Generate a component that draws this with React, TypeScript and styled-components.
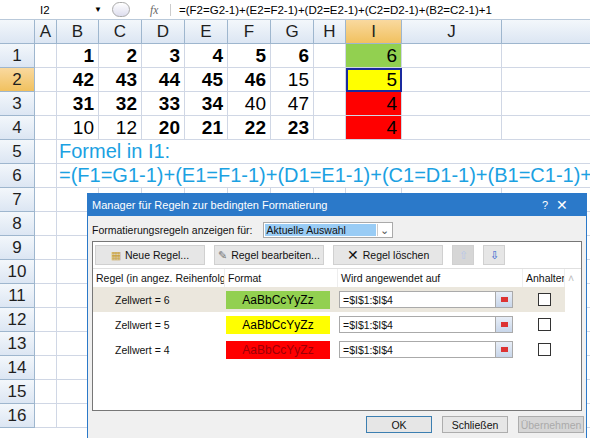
import styled, { createGlobalStyle } from "styled-components";

const Global = createGlobalStyle`
  body { margin: 0; font-family: "Liberation Sans", Arial, sans-serif; background: #fff; overflow: hidden; }
`;

const cols = [
  { n: "", w: 35 }, { n: "A", w: 22 }, { n: "B", w: 42 }, { n: "C", w: 43 }, { n: "D", w: 43 },
  { n: "E", w: 43 }, { n: "F", w: 43 }, { n: "G", w: 43 }, { n: "H", w: 32 }, { n: "I", w: 56 },
  { n: "J", w: 100 }, { n: "", w: 90 },
];

type Cell = { v: string; b?: boolean };
const data: Cell[][] = [
  [{ v: "1", b: true }, { v: "2", b: true }, { v: "3", b: true }, { v: "4", b: true }, { v: "5", b: true }, { v: "6", b: true }],
  [{ v: "42", b: true }, { v: "43", b: true }, { v: "44", b: true }, { v: "45", b: true }, { v: "46", b: true }, { v: "15" }],
  [{ v: "31", b: true }, { v: "32", b: true }, { v: "33", b: true }, { v: "34", b: true }, { v: "40" }, { v: "47" }],
  [{ v: "10" }, { v: "12" }, { v: "20", b: true }, { v: "21", b: true }, { v: "22", b: true }, { v: "23", b: true }],
];
const iVals = [
  { v: "6", bg: "#92d050" },
  { v: "5", bg: "#ffff00" },
  { v: "4", bg: "#ff0000" },
  { v: "4", bg: "#ff0000" },
];

const Page = styled.div`
  position: relative;
  width: 590px;
  height: 438px;
  overflow: hidden;
`;
const FormulaBar = styled.div`
  height: 19px;
  display: flex;
  align-items: center;
  font-size: 11.5px;
  border-bottom: 1px solid #b9c9da;
  white-space: nowrap;
`;
const NameBox = styled.div`
  width: 62px;
  padding-left: 40px;
  display: flex;
  justify-content: space-between;
  align-items: center;
`;
const Fx = styled.span`
  font-family: "Liberation Serif", serif;
  font-style: italic;
  color: #666;
  margin: 0 8px 0 0;
  width: 20px;
  border-right: 1px solid #ccc;
`;
const Oval = styled.span`
  width: 16px;
  height: 13px;
  border: 1px solid #aaa;
  border-radius: 8px;
  margin: 0 100px 0 10px;
  margin-right: 20px;
  background: linear-gradient(#fff, #dde);
`;
const Sheet = styled.div`
  display: grid;
  grid-template-columns: ${cols.map((c) => c.w + "px").join(" ")};
  grid-auto-rows: 24px;
`;
const ColHead = styled.div<{ $sel?: boolean }>`
  background: ${({ $sel }) => ($sel ? "linear-gradient(#f9d99f,#f1c15f)" : "linear-gradient(#f3f7fb,#dce6f3)")};
  border-right: 1px solid #9eb6ce;
  border-bottom: 1px solid #9eb6ce;
  font-size: 17px;
  color: #1f1f1f;
  display: flex;
  align-items: center;
  justify-content: center;
`;
const RowHead = styled(ColHead)``;
const C = styled.div<{ $b?: boolean; $bg?: string; $sel?: boolean }>`
  border-right: 1px solid #d0d7e5;
  border-bottom: 1px solid #d0d7e5;
  background: ${({ $bg }) => $bg || "#fff"};
  font-size: 19px;
  font-weight: ${({ $b }) => ($b ? 700 : 400)};
  display: flex;
  align-items: center;
  justify-content: flex-end;
  padding-right: 4px;
  box-sizing: border-box;
  ${({ $sel }) => ($sel ? "outline: 2px solid #1a2a9e; outline-offset: -2px;" : "")}
`;
const Blue = styled.div`
  grid-column: 3 / span 10;
  color: #1ba1e2;
  font-size: 20px;
  display: flex;
  align-items: center;
  padding-left: 2px;
  white-space: nowrap;
  border-bottom: 1px solid #d0d7e5;
`;

const Dialog = styled.div`
  position: absolute;
  left: 87px;
  top: 193px;
  width: 498px;
  height: 260px;
  background: #f0f0f0;
  border: 1px solid #2b79c9;
  font-size: 10.5px;
  color: #111;
`;
const Title = styled.div`
  height: 22px;
  background: #2b79c9;
  color: #fff;
  font-size: 11px;
  display: flex;
  align-items: center;
  padding-left: 4px;
  gap: 8px;
  span:first-child { flex: 1; }
`;
const Line = styled.div`
  display: flex;
  align-items: center;
  gap: 10px;
  padding: 6px 4px 3px;
`;
const Select = styled.div`
  width: 128px;
  height: 14px;
  border: 1px solid #aaa;
  background: #fff;
  display: flex;
  align-items: center;
  span { background: #99ccf5; flex: 1; padding-left: 2px; margin: 1px; }
  b { width: 14px; border-left: 1px solid #ccc; text-align: center; font-weight: 400; color: #555; }
`;
const ListBox = styled.div`
  margin: 0 4px;
  height: 168px;
  border: 1px solid #777;
  background: #fff;
`;
const Buttons = styled.div`
  display: flex;
  gap: 9px;
  padding: 3px 2px 3px;
  border-bottom: 1px solid #e0e0e0;
`;
const Btn = styled.div<{ $w: number; $dis?: boolean }>`
  width: ${({ $w }) => $w}px;
  height: 18px;
  border: 1px solid #d0d0d0;
  background: ${({ $dis }) => ($dis ? "#d6d6d6" : "#e6e6e6")};
  color: ${({ $dis }) => ($dis ? "#aaa" : "#111")};
  display: flex;
  align-items: center;
  justify-content: center;
  gap: 4px;
  white-space: nowrap;
`;
const Table = styled.div`
  display: grid;
  grid-template-columns: 132px 113px 185px 42px 1fr;
`;
const Th = styled.div`
  height: 18px;
  display: flex;
  align-items: center;
  padding-left: 3px;
  border-right: 1px solid #eee;
  white-space: nowrap;
  overflow: hidden;
`;
const Td = styled.div<{ $hl?: boolean; $center?: boolean }>`
  height: 25px;
  display: flex;
  align-items: center;
  justify-content: ${({ $center }) => ($center ? "center" : "flex-start")};
  background: ${({ $hl }) => ($hl ? "#ebe7dd" : "#fff")};
  padding: 0 1px;
`;
const Swatch = styled.div<{ $bg: string; $fg: string }>`
  width: 104px;
  height: 18px;
  background: ${({ $bg }) => $bg};
  color: ${({ $fg }) => $fg};
  font-size: 12px;
  display: flex;
  align-items: center;
  justify-content: center;
`;
const Range = styled.div`
  width: 174px;
  height: 17px;
  border: 1px solid #aaa;
  background: #fff;
  display: flex;
  align-items: center;
  justify-content: space-between;
  padding-left: 3px;
  box-sizing: border-box;
`;
const RefIcon = styled.div`
  width: 16px;
  height: 15px;
  background: linear-gradient(#e8eef7, #c8d6ea);
  border-left: 1px solid #aaa;
  position: relative;
  &::after { content: ""; position: absolute; left: 5px; top: 5px; width: 7px; height: 5px; background: #d33; }
`;
const Check = styled.div`
  width: 11px;
  height: 11px;
  border: 1px solid #333;
  background: #fff;
`;
const Footer = styled.div`
  display: flex;
  justify-content: flex-end;
  gap: 10px;
  padding: 5px 2px;
`;
const FBtn = styled(Btn)<{ $def?: boolean }>`
  height: 15px;
  border-color: ${({ $def }) => ($def ? "#3c7fb1" : "#adadad")};
`;

const rules = [
  { t: "Zellwert = 6", bg: "#92d050", fg: "#000", hl: true },
  { t: "Zellwert = 5", bg: "#ffff00", fg: "#000" },
  { t: "Zellwert = 4", bg: "#ff0000", fg: "#9c0006" },
];

export default function App() {
  return (
    <Page>
      <Global />
      <FormulaBar>
        <NameBox>I2 <span style={{ fontSize: 8 }}>▼</span></NameBox>
        <Oval />
        <Fx>fx</Fx>
        <span>=(F2=G2-1)+(E2=F2-1)+(D2=E2-1)+(C2=D2-1)+(B2=C2-1)+1</span>
      </FormulaBar>
      <Sheet>
        {cols.map((c, i) => (
          <ColHead key={i} $sel={c.n === "I"}>{c.n}</ColHead>
        ))}
        {Array.from({ length: 16 }, (_, r) => {
          const row = r + 1;
          const head = <RowHead key={"h" + r} $sel={row === 2}>{row}</RowHead>;
          if (row === 5)
            return [head, <C key="a5" />, <Blue key="b5">Formel in I1:</Blue>];
          if (row === 6)
            return [head, <C key="a6" />, <Blue key="b6">=(F1=G1-1)+(E1=F1-1)+(D1=E1-1)+(C1=D1-1)+(B1=C1-1)+1</Blue>];
          const cells = cols.slice(1).map((c, ci) => {
            if (row <= 4) {
              if (ci >= 1 && ci <= 6) {
                const d = data[r][ci - 1];
                return <C key={ci} $b={d.b}>{d.v}</C>;
              }
              if (c.n === "I") {
                const d = iVals[r];
                return <C key={ci} $bg={d.bg} $sel={row === 2}>{d.v}</C>;
              }
            }
            return <C key={ci} />;
          });
          return [head, ...cells];
        })}
      </Sheet>

      <Dialog>
        <Title><span>Manager für Regeln zur bedingten Formatierung</span><span>?</span><span style={{ fontSize: 14, width: 30 }}>✕</span></Title>
        <Line>
          <span>Formatierungsregeln anzeigen für:</span>
          <Select><span>Aktuelle Auswahl</span><b>⌄</b></Select>
        </Line>
        <ListBox>
          <Buttons>
            <Btn $w={108}><span style={{ color: "#c9a13a" }}>▦</span>Neue Regel...</Btn>
            <Btn $w={108}><span style={{ color: "#777" }}>✎</span>Regel bearbeiten...</Btn>
            <Btn $w={108}><span style={{ fontSize: 14 }}>✕</span>Regel löschen</Btn>
            <Btn $w={20} $dis><span style={{ color: "#b8c8e8" }}>⇧</span></Btn>
            <Btn $w={20}><span style={{ color: "#2f5fd0" }}>⇩</span></Btn>
          </Buttons>
          <Table>
            <Th>Regel (in angez. Reihenfolge)</Th>
            <Th>Format</Th>
            <Th>Wird angewendet auf</Th>
            <Th>Anhalten</Th>
            <Th style={{ color: "#bbb", border: 0 }}>˄</Th>
            {rules.map((r) => [
              <Td key={r.t + 1} $hl={r.hl} style={{ paddingLeft: 22 }}>{r.t}</Td>,
              <Td key={r.t + 2} $hl={r.hl}><Swatch $bg={r.bg} $fg={r.fg}>AaBbCcYyZz</Swatch></Td>,
              <Td key={r.t + 3} $hl={r.hl}><Range>=$I$1:$I$4<RefIcon /></Range></Td>,
              <Td key={r.t + 4} $hl={r.hl} $center><Check /></Td>,
              <Td key={r.t + 5} />,
            ])}
          </Table>
        </ListBox>
        <Footer>
          <FBtn $w={64} $def>OK</FBtn>
          <FBtn $w={64}>Schließen</FBtn>
          <FBtn $w={64} $dis>Übernehmen</FBtn>
        </Footer>
      </Dialog>
    </Page>
  );
}
